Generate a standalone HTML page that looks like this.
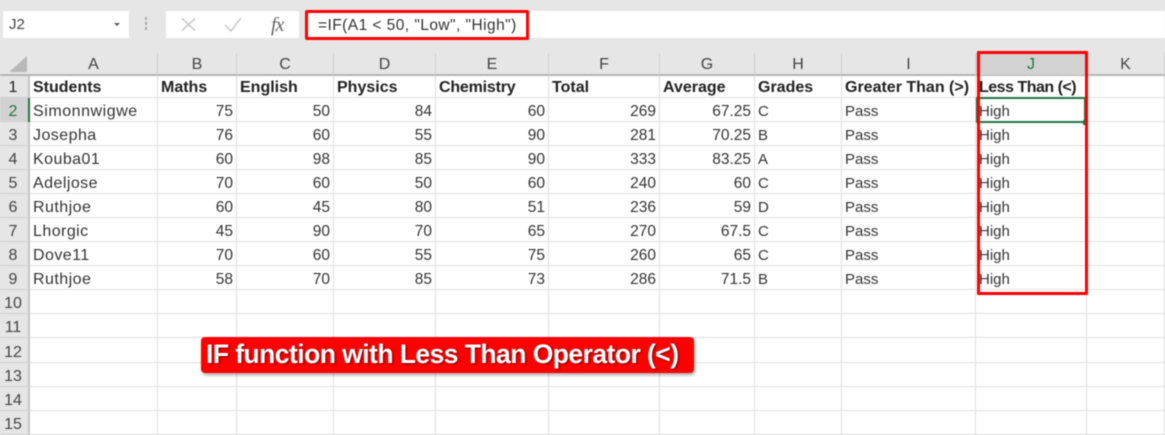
<!DOCTYPE html>
<html><head><meta charset="utf-8"><style>
html,body{margin:0;padding:0}
body{width:1165px;height:427px;overflow:hidden;background:#e6e6e6;position:relative;font-family:"Liberation Sans",sans-serif;color:#333}
.a{position:absolute}
#blur{position:absolute;left:0;top:0;width:1165px;height:427px;filter:blur(.5px)}
table{position:absolute;left:0;top:76px;border-collapse:separate;border-spacing:0;table-layout:fixed;width:1165px;background:#fff;font-size:15px}
td{padding:4px 3px 0 3px;border-right:1px solid #dedede;border-bottom:1px solid #dedede;overflow:hidden;white-space:nowrap;box-sizing:border-box;height:24px;line-height:19px;color:#333}
tr:first-child td{height:22px;padding-top:2px;line-height:19px;font-size:16px;font-weight:bold;color:#222;letter-spacing:0}
td.n{text-align:right;font-size:15.5px}
td:nth-child(2){letter-spacing:.45px;font-size:16px}
td:first-child{background:#e6e6e6;text-align:center;padding:4px 2px 0 0;border-right:2px solid #c6c6c6;border-bottom:1px solid #cfcfcf;font-weight:normal!important;font-size:16px;letter-spacing:0!important;color:#444}
tr.s td:first-child{background:#d2d2d2;color:#217346}
.h{position:absolute;top:53px;height:22px;line-height:24px;text-align:center;font-size:16px;color:#444;border-right:1px solid #cfcfcf;box-sizing:border-box}
</style></head><body><div id="blur">
<div class="a" style="left:3px;top:11px;width:126px;height:27px;background:#fff"></div>
<div class="a" style="left:9px;top:16px;font-size:15px;line-height:18px;color:#444">J2</div>
<div class="a" style="left:114px;top:23px;width:0;height:0;border-left:3px solid transparent;border-right:3px solid transparent;border-top:3px solid #555"></div>
<div class="a" style="left:145px;top:17px;width:2px;height:3px;background:#aaa;box-shadow:0 5px 0 #aaa,0 10px 0 #aaa"></div>
<div class="a" style="left:166px;top:11px;width:133px;height:27px;background:#fff"></div>
<svg class="a" style="left:166px;top:11px" width="114" height="27" fill="none"><path d="M16 7.500L29 19.500M29 7.500L16 19.500" stroke="#c4c4c4" stroke-width="1.500"/><path d="M59 14L65 20L75 7" stroke="#c8c8c8" stroke-width="1.500"/></svg>
<div class="a" style="left:271px;top:13px;font:italic 20px/24px 'Liberation Serif',serif;color:#666;letter-spacing:-1px">fx</div>
<div class="a" style="left:305px;top:11px;width:860px;height:27px;background:#fff"></div>
<div class="a" style="left:305px;top:10px;width:224px;height:30px;box-sizing:border-box;border:3px solid #f00;border-radius:2px;background:#fff"></div>
<div class="a" style="left:318px;top:16px;font-size:15.500px;line-height:20px;color:#333;white-space:nowrap;letter-spacing:.45px">=IF(A1 &lt; 50, "Low", "High")</div>

<div class="a" style="left:0;top:52px;width:1165px;height:24px;background:#e6e6e6;border-bottom:2px solid #b5b5b5;box-sizing:border-box"></div>
<svg class="a" style="left:9px;top:56px" width="19" height="16"><path d="M18 0V16H0Z" fill="#b9b9b9"/></svg>
<div class="h" style="left:30px;width:128px">A</div>
<div class="h" style="left:158px;width:79px">B</div>
<div class="h" style="left:237px;width:97px">C</div>
<div class="h" style="left:334px;width:102px">D</div>
<div class="h" style="left:436px;width:113px">E</div>
<div class="h" style="left:549px;width:111px">F</div>
<div class="h" style="left:660px;width:95px">G</div>
<div class="h" style="left:755px;width:87px">H</div>
<div class="h" style="left:842px;width:134px">I</div>
<div class="h" style="left:976px;width:111px;background:#d2d2d2;color:#217346">J</div>
<div class="h" style="left:1087px;width:78px">K</div>

<table><colgroup><col style="width:30px"><col style="width:128px"><col style="width:79px"><col style="width:97px"><col style="width:102px"><col style="width:113px"><col style="width:111px"><col style="width:95px"><col style="width:87px"><col style="width:134px"><col style="width:111px"><col style="width:78px"></colgroup>
<tr><td>1</td><td>Students</td><td>Maths</td><td>English</td><td>Physics</td><td style="letter-spacing:-.2px">Chemistry</td><td>Total</td><td>Average</td><td>Grades</td><td>Greater Than (&gt;)</td><td style="letter-spacing:-.5px">Less Than (&lt;)</td><td></td></tr>
<tr class="s"><td>2</td><td style="letter-spacing:.55px">Simonnwigwe</td><td class="n">75</td><td class="n">50</td><td class="n">84</td><td class="n">60</td><td class="n">269</td><td class="n">67.25</td><td>C</td><td>Pass</td><td>High</td><td></td></tr>
<tr><td>3</td><td>Josepha</td><td class="n">76</td><td class="n">60</td><td class="n">55</td><td class="n">90</td><td class="n">281</td><td class="n">70.25</td><td>B</td><td>Pass</td><td>High</td><td></td></tr>
<tr><td>4</td><td>Kouba01</td><td class="n">60</td><td class="n">98</td><td class="n">85</td><td class="n">90</td><td class="n">333</td><td class="n">83.25</td><td>A</td><td>Pass</td><td>High</td><td></td></tr>
<tr><td>5</td><td>Adeljose</td><td class="n">70</td><td class="n">60</td><td class="n">50</td><td class="n">60</td><td class="n">240</td><td class="n">60</td><td>C</td><td>Pass</td><td>High</td><td></td></tr>
<tr><td>6</td><td>Ruthjoe</td><td class="n">60</td><td class="n">45</td><td class="n">80</td><td class="n">51</td><td class="n">236</td><td class="n">59</td><td>D</td><td>Pass</td><td>High</td><td></td></tr>
<tr><td>7</td><td>Lhorgic</td><td class="n">45</td><td class="n">90</td><td class="n">70</td><td class="n">65</td><td class="n">270</td><td class="n">67.5</td><td>C</td><td>Pass</td><td>High</td><td></td></tr>
<tr><td>8</td><td>Dove11</td><td class="n">70</td><td class="n">60</td><td class="n">55</td><td class="n">75</td><td class="n">260</td><td class="n">65</td><td>C</td><td>Pass</td><td>High</td><td></td></tr>
<tr><td>9</td><td>Ruthjoe</td><td class="n">58</td><td class="n">70</td><td class="n">85</td><td class="n">73</td><td class="n">286</td><td class="n">71.5</td><td>B</td><td>Pass</td><td>High</td><td></td></tr>
<tr><td style="height:23px;padding-top:3px">10</td><td></td><td></td><td></td><td></td><td></td><td></td><td></td><td></td><td></td><td></td><td></td></tr>
<tr><td>11</td><td></td><td></td><td></td><td></td><td></td><td></td><td></td><td></td><td></td><td></td><td></td></tr>
<tr><td style="height:25px">12</td><td></td><td></td><td></td><td></td><td></td><td></td><td></td><td></td><td></td><td></td><td></td></tr>
<tr><td style="height:23px;padding-top:3px">13</td><td></td><td></td><td></td><td></td><td></td><td></td><td></td><td></td><td></td><td></td><td></td></tr>
<tr><td style="height:23px;padding-top:3px">14</td><td></td><td></td><td></td><td></td><td></td><td></td><td></td><td></td><td></td><td></td><td></td></tr>
<tr><td>15</td><td></td><td></td><td></td><td></td><td></td><td></td><td></td><td></td><td></td><td></td><td></td></tr>
</table>

<div class="a" style="left:28px;top:98px;width:2px;height:24px;background:#217346"></div>
<div class="a" style="left:976px;top:97px;width:110px;height:26px;box-sizing:border-box;border:2px solid #217346"></div>
<div class="a" style="left:1083px;top:120px;width:5px;height:5px;background:#217346"></div>
<div class="a" style="left:977px;top:51px;width:111px;height:244px;box-sizing:border-box;border:3px solid #f00;border-radius:1px"></div>
<div class="a" style="left:201px;top:337px;width:493px;height:36px;background:#f00;border-radius:4px;box-shadow:1px 2px 3px rgba(0,0,0,.35)"></div>
<div class="a" style="left:206px;top:337px;height:36px;line-height:34px;font-size:26.500px;font-weight:bold;color:#fff;white-space:nowrap;letter-spacing:-.55px;text-shadow:1px 1px 2px rgba(90,0,0,.8)">IF function with Less Than Operator (&lt;)</div>
</div></body></html>
